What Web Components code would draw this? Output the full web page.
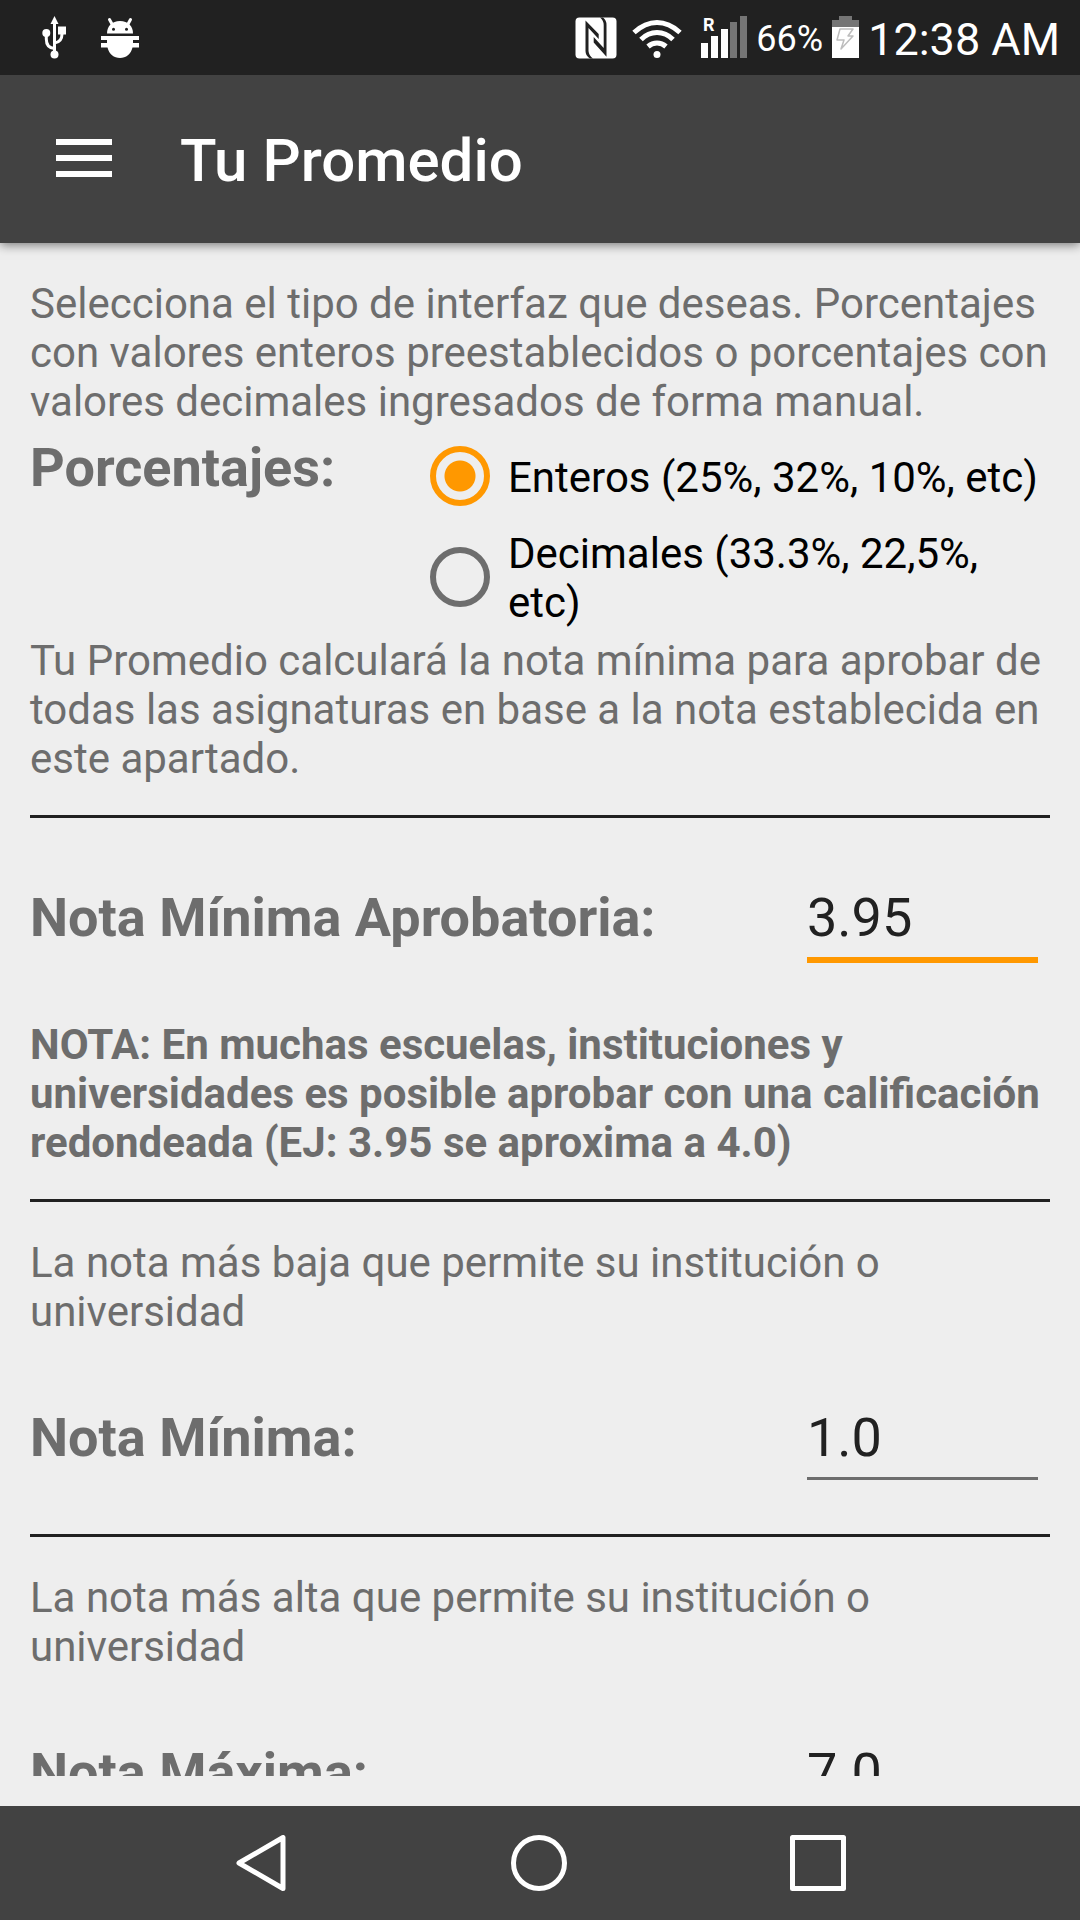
<!DOCTYPE html>
<html lang="es">
<head>
<meta charset="utf-8">
<meta name="viewport" content="width=device-width, initial-scale=1">
<title>Tu Promedio</title>
<style>
  body {
    margin: 0;
    background: #eee;
    color: #6d6d6d;
    font-family: Roboto, "Liberation Sans", sans-serif;
    font-size: 42px;
    line-height: 49px;
  }
</style>
</head>
<body>
<app-screen>
  <status-bar slot="top" battery="66%" time="12:38 AM"></status-bar>
  <app-toolbar slot="top">Tu Promedio</app-toolbar>

  <info-text>Selecciona el tipo de interfaz que deseas. Porcentajes con valores enteros preestablecidos o porcentajes con valores decimales ingresados de forma manual.</info-text>
  <choice-group label="Porcentajes:" options="Enteros (25%, 32%, 10%, etc)|Decimales (33.3%, 22,5%, etc)"></choice-group>
  <info-text>Tu Promedio calculará la nota mínima para aprobar de todas las asignaturas en base a la nota establecida en este apartado.</info-text>

  <line-divider></line-divider>
  <grade-field label="Nota Mínima Aprobatoria:" value="3.95" active></grade-field>
  <info-text strong>NOTA: En muchas escuelas, instituciones y universidades es posible aprobar con una calificación redondeada (EJ: 3.95 se aproxima a 4.0)</info-text>

  <line-divider></line-divider>
  <info-text spaced>La nota más baja que permite su institución o universidad</info-text>
  <grade-field label="Nota Mínima:" value="1.0"></grade-field>

  <line-divider></line-divider>
  <info-text spaced>La nota más alta que permite su institución o universidad</info-text>
  <grade-field label="Nota Máxima:" value="7.0"></grade-field>

  <nav-bar slot="bottom"></nav-bar>
</app-screen>

<script>
class AppScreen extends HTMLElement {
  connectedCallback() {
    this.attachShadow({ mode: 'open' });
    this.shadowRoot.innerHTML = `
      <style>
        :host {
          display: flex;
          flex-direction: column;
          height: 100vh;
        }

        header {
          z-index: 1;
          box-shadow: 0 2px 10px rgba(0, 0, 0, 0.5);
        }

        main {
          flex: 1;
          min-height: 0;
          box-sizing: border-box;
          padding: 36px 30px 0;
          margin-bottom: 30px;
          overflow: hidden;
        }
      </style>

      <header><slot name="top"></slot></header>
      <main><slot></slot></main>
      <slot name="bottom"></slot>
    `;
  }
}

class StatusBar extends HTMLElement {
  connectedCallback() {
    this.attachShadow({ mode: 'open' });
    this.shadowRoot.innerHTML = `
      <style>
        :host {
          display: flex;
          justify-content: space-between;
          height: 75px;
          padding: 0 20px 0 41px;
          background: #212121;
          color: #fff;
        }

        div {
          display: flex;
          align-items: center;
        }

        .left { gap: 33px; }
        .right { gap: 9px; }
        .right svg:first-child { margin-right: 6px; }
        .right svg:nth-child(2) { margin-right: 10px; }
        svg { display: block; fill: #fff; overflow: visible; }
        span { padding-top: 4px; }
        .battery { font-size: 36px; }
        .time { font-size: 45px; }
      </style>

      <div class="left">
        <svg width="26" height="45" viewBox="0 0 26 45" aria-label="USB">
          <path d="M13.500 1 L17.500 9 H9.500 Z"/>
          <circle cx="13.500" cy="39.500" r="4"/>
          <circle cx="5.300" cy="18" r="4"/>
          <rect x="17" y="11.500" width="8" height="8"/>
          <path d="M13.500 6 V38 M5.300 18 V24 Q5.300 33 13.500 33.500 M21 19 Q21 27 13.500 28" fill="none" stroke="#fff" stroke-width="3"/>
        </svg>
        <svg width="40" height="45" viewBox="0 0 40 45" aria-label="Android">
          <path d="M7 18.500 C7 11 12 6 20 6 S33 11 33 18.500 Z"/>
          <path d="M9.500 4.500 L12.500 10 M30.500 4.500 L27.500 10" stroke="#fff" stroke-width="3" stroke-linecap="round"/>
          <circle cx="13.500" cy="14.300" r="1.500" fill="#212121"/>
          <circle cx="26.500" cy="14.300" r="1.500" fill="#212121"/>
          <path d="M1 21 H39 V25 H33 V28 H39 V32.500 H32.500 C31 39 26 43 20 43 S9 39 7.500 32.500 H1 V28 H7 V25 H1 Z"/>
        </svg>
      </div>

      <div class="right">
        <svg width="42" height="45" viewBox="0 0 42 45" aria-label="NFC">
          <rect x="0.500" y="2.500" width="41" height="41" rx="4"/>
          <g fill="#212121">
            <path d="M10.500 5.500 L23.700 19 V24 L13.500 13 V36 Q14 41 18 43.500 H15 Q10.500 41 10.500 36 Z"/>
            <path d="M31.500 41.700 L18.700 27.500 V22 L28.700 33 V10 Q28.500 5 25 2.500 H28 Q31.500 5 31.500 10 Z"/>
          </g>
        </svg>
        <svg width="50" height="45" viewBox="0 0 50 45" aria-label="Wi-Fi">
          <g fill="none" stroke="#fff" stroke-width="5">
            <path d="M2 17.500 Q13 7.500 25 7.500 T48 17.500"/>
            <path d="M9 24.500 Q16 17.500 25 17.500 T41 24.500"/>
            <path d="M16 31.500 Q20 28 25 28 T34 31.500"/>
          </g>
          <circle cx="25" cy="39.500" r="3.500"/>
        </svg>
        <svg width="46" height="45" viewBox="0 0 46 45" aria-label="Signal">
          <text x="2" y="16" font-size="18" font-weight="700">R</text>
          <rect x="0" y="28" width="7" height="15"/>
          <rect x="10" y="21" width="7" height="22"/>
          <rect x="20" y="14" width="7" height="29"/>
          <rect x="29" y="7" width="7" height="36" fill="#757575"/>
          <rect x="39" y="1" width="7" height="42" fill="#757575"/>
        </svg>
        <span class="battery"></span>
        <svg width="27" height="45" viewBox="0 0 27 45" aria-label="Battery">
          <path d="M7 1 H20 V5 H27 V12 H0 V5 H7 Z" fill="#757575"/>
          <rect y="12" width="27" height="31"/>
          <path d="M8 14 H21 L16 21 H21 L9 34 L12 25 H5 Z" fill="none" stroke="#bdbdbd" stroke-width="1.500" stroke-linejoin="round"/>
        </svg>
        <span class="time"></span>
      </div>
    `;

    this.shadowRoot.querySelector('.battery').textContent = this.getAttribute('battery');
    this.shadowRoot.querySelector('.time').textContent = this.getAttribute('time');
  }
}

class AppToolbar extends HTMLElement {
  connectedCallback() {
    this.attachShadow({ mode: 'open' });
    this.shadowRoot.innerHTML = `
      <style>
        :host {
          display: flex;
          align-items: center;
          gap: 60px;
          box-sizing: border-box;
          height: 168px;
          padding: 4px 48px 0;
          background: #424242;
          color: #fff;
        }

        button {
          padding: 0;
          border: none;
          background: none;
          cursor: pointer;
        }

        svg { display: block; }

        h1 {
          margin: 0;
          font-size: 60px;
          font-weight: 500;
          line-height: 70px;
        }
      </style>

      <button aria-label="Menú">
        <svg width="72" height="72" viewBox="0 0 72 72" fill="#fff">
          <path d="M8 14 h56 v6 h-56 Z M8 30 h56 v6 h-56 Z M8 46 h56 v6 h-56 Z"/>
        </svg>
      </button>
      <h1><slot></slot></h1>
    `;
  }
}

class InfoText extends HTMLElement {
  connectedCallback() {
    this.attachShadow({ mode: 'open' });
    this.shadowRoot.innerHTML = `
      <style>
        :host { display: block; padding-bottom: 2px; }
        :host([strong]) { font-weight: 700; padding-top: 6px; }
        :host([spaced]) { padding-top: 36px; }
        p { margin: 0; }
      </style>

      <p><slot></slot></p>
    `;
  }
}

class LineDivider extends HTMLElement {
  connectedCallback() {
    this.attachShadow({ mode: 'open' });
    this.shadowRoot.innerHTML = `
      <style>
        :host { display: block; padding-top: 30px; }
        hr { margin: 0; border: none; height: 3px; background: #212121; }
      </style>

      <hr>
    `;
  }
}

class ChoiceGroup extends HTMLElement {
  connectedCallback() {
    this.attachShadow({ mode: 'open' });
    this.shadowRoot.innerHTML = `
      <style>
        :host {
          display: grid;
          grid-template-columns: 400px 1fr;
          padding-bottom: 9px;
        }

        .title {
          padding-top: 8px;
          font-size: 54px;
          font-weight: 700;
          line-height: 63px;
        }

        .options {
          display: grid;
          gap: 3px;
        }

        label {
          display: flex;
          align-items: center;
          gap: 18px;
          min-height: 98px;
          color: #000;
        }

        input {
          appearance: none;
          flex: none;
          box-sizing: border-box;
          width: 60px;
          height: 60px;
          margin: 0 0 2px;
          border: 6px solid #6d6d6d;
          border-radius: 50%;
        }

        input:checked {
          border-color: #ff9800;
          background: radial-gradient(circle, #ff9800 15px, transparent 16px);
        }
      </style>

      <div class="title" id="title"></div>
      <div class="options" role="radiogroup" aria-labelledby="title"></div>
    `;

    this.shadowRoot.querySelector('.title').textContent = this.getAttribute('label');

    const options = this.shadowRoot.querySelector('.options');
    this.getAttribute('options').split('|').forEach((text, i) => {
      const label = document.createElement('label');
      const input = document.createElement('input');
      const span = document.createElement('span');
      input.type = 'radio';
      input.name = 'choice';
      input.checked = i === 0;
      span.textContent = text;
      label.append(input, span);
      options.append(label);
    });
  }
}

class GradeField extends HTMLElement {
  connectedCallback() {
    this.attachShadow({ mode: 'open' });
    this.shadowRoot.innerHTML = `
      <style>
        :host {
          display: flex;
          justify-content: space-between;
          padding: 68px 12px 21px 0;
          font-size: 54px;
          line-height: 63px;
        }

        :host([active]) { padding-bottom: 51px; }

        label { font-weight: 700; }

        input {
          box-sizing: border-box;
          width: 231px;
          height: 74px;
          margin-bottom: 3px;
          padding: 0 0 8px;
          border: none;
          border-bottom: 3px solid #6d6d6d;
          outline: none;
          background: none;
          color: #212121;
          font: inherit;
        }

        :host([active]) input,
        input:focus {
          height: 77px;
          margin-bottom: 0;
          border-bottom: 6px solid #ff9800;
        }
      </style>

      <label for="grade"></label>
      <input id="grade" type="text" inputmode="decimal">
    `;

    this.shadowRoot.querySelector('label').textContent = this.getAttribute('label');
    this.shadowRoot.querySelector('input').value = this.getAttribute('value');
  }
}

class NavBar extends HTMLElement {
  connectedCallback() {
    this.attachShadow({ mode: 'open' });
    this.shadowRoot.innerHTML = `
      <style>
        :host {
          display: grid;
          grid-template-columns: repeat(3, 1fr);
          height: 114px;
          padding: 0 123px 0 121px;
          background: #424242;
        }

        button {
          display: grid;
          place-items: center;
          padding: 0;
          border: none;
          background: none;
          cursor: pointer;
        }

        svg {
          fill: none;
          stroke: #fff;
          stroke-width: 5;
          stroke-linejoin: round;
        }
      </style>

      <button aria-label="Atrás">
        <svg width="56" height="56" viewBox="0 0 56 56"><path d="M7 28 L51 2.500 V53.500 Z"/></svg>
      </button>
      <button aria-label="Inicio">
        <svg width="56" height="56" viewBox="0 0 56 56"><circle cx="28" cy="28" r="25.500"/></svg>
      </button>
      <button aria-label="Recientes">
        <svg width="56" height="56" viewBox="0 0 56 56"><rect x="2.500" y="2.500" width="51" height="51"/></svg>
      </button>
    `;
  }
}

customElements.define('app-screen', AppScreen);
customElements.define('status-bar', StatusBar);
customElements.define('app-toolbar', AppToolbar);
customElements.define('info-text', InfoText);
customElements.define('line-divider', LineDivider);
customElements.define('choice-group', ChoiceGroup);
customElements.define('grade-field', GradeField);
customElements.define('nav-bar', NavBar);
</script>
</body>
</html>
